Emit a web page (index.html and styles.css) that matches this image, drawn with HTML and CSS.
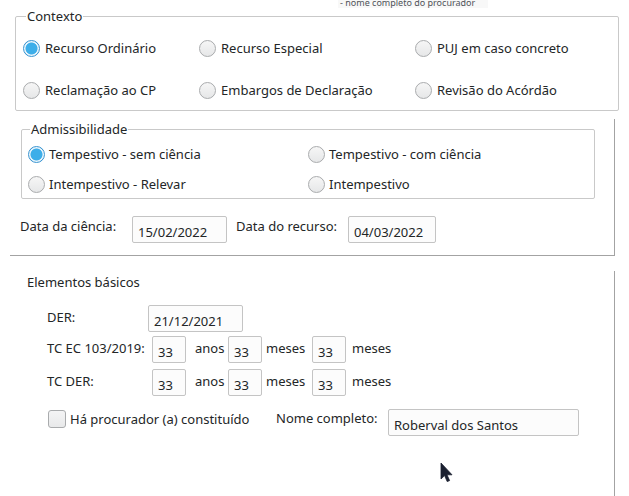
FILE: index.html
```html
<!DOCTYPE html>
<html lang="pt">
<head>
<meta charset="utf-8">
<title>Formulário</title>
<link rel="stylesheet" href="styles.css">
</head>
<body>
<div class="window">
  <div class="tooltip">- nome completo do procurador</div>

  <fieldset class="group ctx">
    <legend>Contexto</legend>
    <div class="ctx-grid">
      <label class="opt"><span class="radio on"></span>Recurso Ordinário</label>
      <label class="opt"><span class="radio"></span>Recurso Especial</label>
      <label class="opt"><span class="radio"></span>PUJ em caso concreto</label>
      <label class="opt"><span class="radio"></span>Reclamação ao CP</label>
      <label class="opt"><span class="radio"></span>Embargos de Declaração</label>
      <label class="opt"><span class="radio"></span>Revisão do Acórdão</label>
    </div>
  </fieldset>

  <div class="panel p1">
    <fieldset class="group adm">
      <legend>Admissibilidade</legend>
      <div class="adm-grid">
        <label class="opt"><span class="radio on"></span>Tempestivo - sem ciência</label>
        <label class="opt"><span class="radio"></span>Tempestivo - com ciência</label>
        <label class="opt"><span class="radio"></span>Intempestivo - Relevar</label>
        <label class="opt"><span class="radio"></span>Intempestivo</label>
      </div>
    </fieldset>
    <div class="dates">
      <span class="lbl l-ciencia">Data da ciência:</span>
      <span class="field f-date1">15/02/2022</span>
      <span class="lbl l-recurso">Data do recurso:</span>
      <span class="field f-date2">04/03/2022</span>
    </div>
  </div>

  <div class="panel p2">
    <div class="title">Elementos básicos</div>
    <div class="frow r-der">
      <span class="lbl l-der">DER:</span>
      <span class="field f-der">21/12/2021</span>
    </div>
    <div class="frow r-tc">
      <span class="lbl l-tc">TC EC 103/2019:</span>
      <span class="field f-num">33</span>
      <span class="unit u-anos">anos</span>
      <span class="field f-num">33</span>
      <span class="unit u-mes">meses</span>
      <span class="field f-num">33</span>
      <span class="unit u-mes2">meses</span>
    </div>
    <div class="frow r-tcder">
      <span class="lbl l-tc">TC DER:</span>
      <span class="field f-num">33</span>
      <span class="unit u-anos">anos</span>
      <span class="field f-num">33</span>
      <span class="unit u-mes">meses</span>
      <span class="field f-num">33</span>
      <span class="unit u-mes2">meses</span>
    </div>
    <div class="frow r-proc">
      <label class="check-opt"><span class="checkbox"></span>Há procurador (a) constituído</label>
      <span class="lbl l-nome">Nome completo:</span>
      <span class="field f-nome">Roberval dos Santos</span>
    </div>
  </div>

  <svg class="cursor" width="14" height="22" viewBox="0 0 14 22" aria-hidden="true">
    <path d="M1 1 L1 17 L4.6 13.6 L7.2 19.6 L9.6 18.6 L7 12.8 L12 12.8 Z" fill="#1b2030" stroke="#1b2030" stroke-width="0.8" stroke-linejoin="round"/>
  </svg>
</div>
</body>
</html>
```

FILE: styles.css
```css
* { box-sizing: border-box; }

html, body {
  margin: 0;
  padding: 0;
  background: #ffffff;
}

body {
  font-family: "Noto Sans", "DejaVu Sans", sans-serif;
  font-size: 13px;
  line-height: 18px;
  color: #232627;
}

.window {
  position: relative;
  width: 629px;
  height: 496px;
  overflow: hidden;
  padding: 0 15px 0 10px;
}

.tooltip {
  position: absolute;
  left: 338px;
  top: -3px;
  width: 150px;
  height: 11px;
  padding-left: 2px;
  background: #f8f8f8;
  color: #4f5358;
  font-size: 9px;
  line-height: 11px;
}

.group {
  margin: 0;
  padding: 0;
  border: 1px solid #c9c9c9;
  border-radius: 2px;
  min-width: 0;
}

.group legend {
  padding: 0 1px;
  line-height: 18px;
}

/* Contexto */
.ctx {
  margin: 7px 0 0 5px;
  width: 604px;
  padding: 11px 0 8px 7px;
}
.ctx legend { margin-left: 3px; }

.ctx-grid {
  display: grid;
  grid-template-columns: 176px 216px auto;
  row-gap: 18px;
}

.opt {
  display: flex;
  align-items: center;
  height: 24px;
  white-space: nowrap;
}

.radio {
  width: 17px;
  height: 17px;
  border-radius: 50%;
  border: 1px solid #a9abad;
  background: linear-gradient(#f6f6f6, #e6e7e8);
  margin-right: 5px;
  flex: none;
}
.radio.on {
  border-color: #3a95d1;
  background: radial-gradient(circle, #3daee9 0 5.6px, #eaf5fc 6.4px 7.6px, #3a95d1 8px);
}

/* Panels */
.panel {
  width: 605px;
  border-right: 1px solid #a3a3a3;
}

.p1 {
  margin-top: 8px;
  border-bottom: 1px solid #a3a3a3;
  padding: 1px 0 12px 11px;
}

.adm {
  width: 574px;
  padding: 4px 0 2px 6px;
}
.adm legend { margin-left: 2px; }

.adm-grid {
  display: grid;
  grid-template-columns: 280px auto;
  row-gap: 6px;
}
.adm .radio { margin-right: 4px; }

.dates {
  display: flex;
  align-items: flex-start;
  margin-top: 17px;
  margin-left: -1px;
}

.lbl {
  display: inline-block;
  white-space: nowrap;
  padding-top: 3px;
}

.dates .lbl { padding-top: 1px; }
.l-ciencia { width: 112px; }
.l-recurso { width: 112px; margin-left: 9px; }

.field {
  display: inline-block;
  height: 27px;
  border: 1px solid #c4c4c4;
  border-radius: 2px;
  background: #fcfcfc;
  padding: 6px 0 0 5px;
  line-height: 18px;
  white-space: nowrap;
  flex: none;
}

.f-date1 { width: 95px; }
.f-date2 { width: 88px; }

/* Panel 2 */
.p2 {
  margin-top: 15px;
  height: 240px;
  padding: 2px 0 0 17px;
}

.title { line-height: 18px; }

.frow {
  display: flex;
  align-items: flex-start;
  margin-left: 20px;
}

.r-der { margin-top: 14px; }
.r-tc { margin-top: 4px; }
.r-tcder { margin-top: 6px; }
.r-proc { margin-top: 13px; }

.l-der { width: 101px; }
.f-der { width: 95px; }
.l-tc { width: 105px; }
.f-num { width: 34px; }

.unit {
  display: inline-block;
  padding-top: 3px;
  white-space: nowrap;
}
.u-anos { width: 42px; padding-left: 9px; }
.u-mes { width: 50px; padding-left: 4px; }
.u-mes2 { padding-left: 6px; }

.check-opt {
  display: flex;
  align-items: flex-start;
  width: 228px;
  margin-left: 1px;
  padding-top: 1px;
  white-space: nowrap;
}

.checkbox {
  width: 18px;
  height: 18px;
  border: 1px solid #a9abad;
  border-radius: 3px;
  background: linear-gradient(#f4f4f5, #e8e9ea);
  margin-right: 4px;
  flex: none;
}

.l-nome { width: 112px; padding-top: 0; }
.f-nome { width: 191px; }

.cursor {
  position: absolute;
  left: 440px;
  top: 462px;
}
```
